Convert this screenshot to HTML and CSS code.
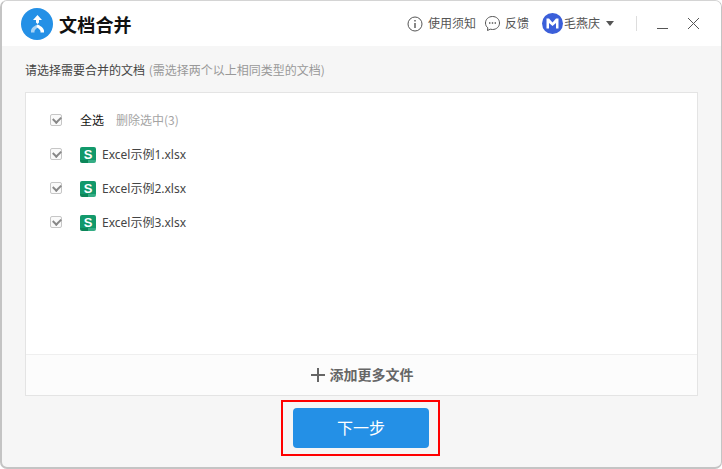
FILE: index.html
```html
<!DOCTYPE html>
<html lang="zh-CN">
<head>
<meta charset="utf-8">
<title>文档合并</title>
<link rel="stylesheet" href="styles.css">
</head>
<body>
<div class="window">
  <header class="header">
    <div class="brand">
      <svg class="logo" width="32" height="32" viewBox="0 0 32 32"><circle cx="16" cy="16" r="16" fill="#2490e6"/><path d="M16.500 7l4.500 5h-3v2.500l-1.500 1.500-1.500-1.500V12h-3z" fill="#fff"/><path d="M16.500 16.500c-3 1.500-5.500 2.500-6.500 6v2h3.500v-1.500c.5-1.500 2-2.500 4-4z" fill="#a9d3f5"/><path d="M16.500 16.500c3 1.500 5.500 2.500 6.500 6v2h-3.500v-1.500c-.5-1.500-2-2.500-4-4z" fill="#fff"/></svg>
      <span class="title">文档合并</span>
    </div>
    <div class="tools">
      <div class="tool info">
        <svg width="16" height="16" viewBox="0 0 16 16" fill="none" stroke="#555"><circle cx="8" cy="8" r="7"/><path d="M8 7v5M8 4v1.500" stroke-width="1.400"/></svg>
        <span>使用须知</span>
      </div>
      <div class="tool">
        <svg width="17" height="17" viewBox="0 0 17 17" fill="none" stroke="#555"><path d="M8.500 1.500c4 0 7 2.800 7 6.500s-3 6.500-7 6.500c-.8 0-1.500-.1-2.200-.3L3.500 15.500l.3-2.700C2.300 11.600 1.500 10 1.500 8c0-3.700 3-6.500 7-6.500z"/><path d="M5 8h1.400M7.800 8h1.400M10.600 8H12" stroke-width="1.400"/></svg>
        <span>反馈</span>
      </div>
      <div class="tool user">
        <svg width="21" height="21" viewBox="0 0 21 21"><circle cx="10.500" cy="10.500" r="10.500" fill="#3b5fd9"/><path d="M4.500 15.500V5.500h2.500l3.500 4 3.500-4h2.500v10h-2.500V10l-3.500 3-3.500-3v5.500z" fill="#fff"/></svg>
        <span>毛燕庆</span>
        <i class="caret"></i>
      </div>
      <i class="sep"></i>
      <svg class="ctl" width="12" height="12" viewBox="0 0 12 12" stroke="#555"><path d="M0 10.500h11"/></svg>
      <svg class="ctl close" width="13" height="13" viewBox="0 0 13 13" stroke="#555" fill="none"><path d="M1 1l11 11M12 1L1 12"/></svg>
    </div>
  </header>
  <main class="content">
    <p class="hint">请选择需要合并的文档 <span>(需选择两个以上相同类型的文档)</span></p>
    <section class="panel">
      <div class="list">
        <div class="row">
          <i class="check"></i>
          <span class="all">全选</span>
          <span class="remove">删除选中(3)</span>
        </div>
        <div class="row">
          <i class="check"></i>
          <i class="sheet">S</i>
          <span class="file">Excel示例1.xlsx</span>
        </div>
        <div class="row">
          <i class="check"></i>
          <i class="sheet">S</i>
          <span class="file">Excel示例2.xlsx</span>
        </div>
        <div class="row">
          <i class="check"></i>
          <i class="sheet">S</i>
          <span class="file">Excel示例3.xlsx</span>
        </div>
      </div>
      <div class="add">
        <svg width="14" height="14" viewBox="0 0 14 14" stroke="#666" stroke-width="2"><path d="M7 0v14M0 7h14"/></svg>
        <span>添加更多文件</span>
      </div>
    </section>
    <div class="next-wrap">
      <div class="next-mark"><button class="next">下一步</button></div>
    </div>
  </main>
</div>
</body>
</html>
```
FILE: styles.css
```css
* { box-sizing: border-box; }
html, body { margin: 0; height: 100%; background: #fff; }
body { font-family: "Noto Sans CJK SC", "Liberation Sans", sans-serif; overflow: hidden; }
i { font-style: normal; display: block; }
.window {
  width: 722px; height: 469px;
  border: 1px solid #c4c4c4; border-top-color: #d4d4d4; border-bottom-width: 2px; border-left-width: 2px;
  border-radius: 7px;
  overflow: hidden;
  display: flex; flex-direction: column;
  background: #f6f6f6;
}
.header {
  height: 45px; flex: none; background: #fff;
  display: flex; align-items: center; justify-content: space-between;
  padding: 0 21px 0 19px;
}
.brand { display: flex; align-items: center; gap: 6px; margin-top: 1px; }
.logo { display: block; }
.title { font-size: 18px; font-weight: 700; color: #111; line-height: 24px; letter-spacing: .2px; }
.tools { display: flex; align-items: center; font-size: 12px; color: #555; }
.tool { display: flex; align-items: center; gap: 4px; margin-right: 8px; line-height: 16px; }
.tool span { padding-bottom: 1px; }
.tool svg { display: block; }
.info { gap: 5px; }
.user { margin-left: 5px; gap: 1px; margin-right: 0; }
.caret { width: 0; height: 0; margin-left: 5px; border: 4px solid transparent; border-top: 5px solid #555; border-bottom: 0; }
.sep { width: 1px; height: 15px; background: #ddd; margin: 0 20px 0 22px; }
.close { margin-left: 18px; }
.ctl { display: block; }
.content { flex: 1; display: flex; flex-direction: column; padding: 0 23px; }
.hint { margin: 15px 0 0; height: 31px; font-size: 12px; line-height: 18px; color: #444; }
.hint span { color: #999; margin-left: 1px; }
.panel {
  height: 304px; background: #fff; border: 1px solid #e4e4e4;
  display: flex; flex-direction: column;
}
.list { flex: 1; padding: 10px 0 0 24px; }
.row { height: 34px; display: flex; align-items: center; font-size: 12px; }
.check {
  width: 12px; height: 12px; border: 1px solid #c6c6c6; border-radius: 2px; background: #fafafa;
  position: relative; margin-right: 18px;
}
.check::after {
  content: ""; position: absolute; left: 2px; top: 1px; width: 6px; height: 4px;
  border-left: 2px solid #888; border-bottom: 2px solid #888;
  transform: rotate(-45deg);
}
.all { color: #111; margin-right: 12px; padding-bottom: 2px; }
.remove { color: #a4a4a4; padding-bottom: 2px; }
.sheet {
  width: 16px; height: 16px; margin: 2px 6px 0 0; border-radius: 2px;
  background: linear-gradient(90deg, #0c8659 0 8px, #35ad85 8px) bottom / 100% 3px no-repeat, #12996b;
  color: #fff; font: 700 13px/15px "Liberation Sans", sans-serif; text-align: center;
}
.file { color: #444; font-family: "Noto Sans", "Noto Sans CJK SC", sans-serif; }
.add {
  height: 41px; flex: none; border-top: 1px solid #efefef; background: #fcfcfc;
  display: flex; align-items: center; justify-content: center; gap: 5px;
  font-size: 14px; font-weight: 700; color: #666; padding: 0 0 0 1px;
}
.add span { padding-bottom: 2px; }
.add svg { display: block; }
.next-wrap { display: flex; justify-content: center; padding: 4px 2px 0 0; }
.next-mark { width: 159px; height: 56px; border: 2px solid #f00; padding: 6px 10px; }
.next {
  display: block; width: 136px; height: 40px; border: 0; border-radius: 4px;
  background: #2490e6; color: #fff; font: 16px/38px "Noto Sans CJK SC", sans-serif; padding: 0 0 2px;
}
```
